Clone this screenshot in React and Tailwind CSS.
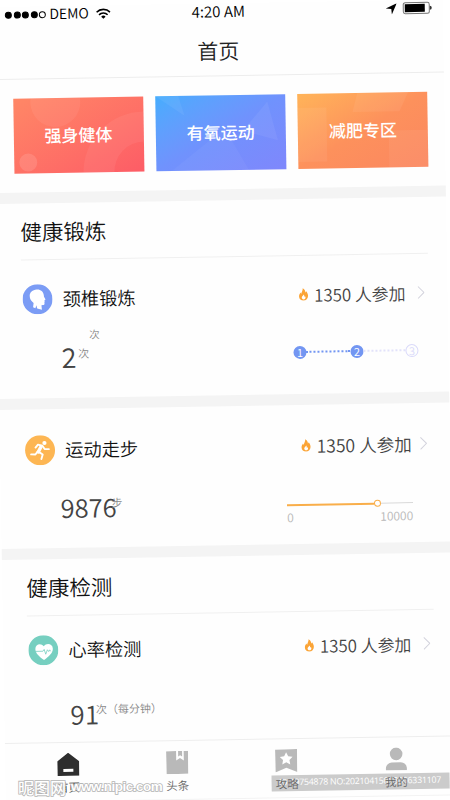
const categories = [
    { label: '强身健体', bg: 'bg-linear-to-br from-[#ff8766] to-[#fd5c66]', shape: 'rings' },
    { label: '有氧运动', bg: 'bg-linear-to-br from-[#45adfd] via-[#7092fd] to-[#7f87fc]', shape: 'triangles' },
    { label: '减肥专区', bg: 'bg-linear-to-br from-[#ffb459] via-[#fd915c] to-[#fb8760]', shape: 'blocks' },
];

const dots = [true, true, true, true, false];

function Shapes({ type }) {
    return (
        <svg className="absolute inset-0" width="130" height="76" viewBox="0 0 130 76" fill="#fff" fillOpacity="0.06">
            {type === 'rings' && (
                <>
                    <circle cx="42" cy="4" r="25" />
                    <circle cx="14" cy="64" r="9" fillOpacity="0.12" />
                    <path d="M69 76a61 61 0 0 1 61-61v30a30 30 0 0 0-30 31z" />
                </>
            )}
            {type === 'triangles' && (
                <>
                    <path d="M0 0l29 20L23 0z" />
                    <path d="M14 76l55-43 24 43z" fillOpacity="0.04" />
                    <path d="M112 7L87 36l35 10z" />
                </>
            )}
            {type === 'blocks' && (
                <>
                    <path d="M60 0h51l-9 19H55z" />
                    <path d="M0 14h29v54H0z" />
                    <path d="M91 38h39v38H91z" />
                </>
            )}
        </svg>
    );
}

function HeadIcon() {
    return (
        <svg width="30" height="30" viewBox="0 0 30 30">
            <circle cx="15" cy="15" r="15" fill="#7b9cf5" />
            <path
                d="M14.200 5.300c4-.3 6.600 2.200 7.100 5.400l.2 1.800 1.500 2.800-1.100.7.2 1.200-.3.600.1 1.500c0 1.100-.6 1.600-1.600 1.600h-1.500l.4 4.700-4.700-1.300-.8-3.400-1 3-2.300-1 .6-4.300C8.800 16.800 7.100 14.500 7.200 11.500 7.300 8 10.200 5.600 14.200 5.300z"
                fill="#fff"
            />
        </svg>
    );
}

function RunIcon() {
    return (
        <svg width="30" height="30" viewBox="0 0 30 30" fill="none" stroke="#fff" strokeWidth="1.900" strokeLinecap="round" strokeLinejoin="round">
            <circle cx="15" cy="15" r="15" fill="#fdb653" stroke="none" />
            <circle cx="19.500" cy="7.800" r="2.100" fill="#fff" stroke="none" />
            <path d="M10.500 12.200l2.500-2.900 4.400 1.200 2.200 3.300 4.200.2" />
            <path d="M16 11.500l-2.800 5.200" strokeWidth="3.400" />
            <path d="M12.500 16.200l-2.200 3-4.300-.2" />
            <path d="M14 16.800l3.600 2.500-1.400 4.500" />
        </svg>
    );
}

function HeartIcon() {
    return (
        <svg width="30" height="30" viewBox="0 0 30 30" fill="none">
            <circle cx="15" cy="15" r="15" fill="#76cfc0" />
            <path d="M15.500 24.800C10.500 21 7 18 7 13.600 7 8.500 12.800 7.400 15.500 11c2.700-3.600 9-2.500 9 2.600 0 4.400-4 7.400-9 11.200z" fill="#fff" />
            <path d="M7 16h7.500l1.300-1.800 1.500 4.800 1.700-4.400 1.300 1.800 1-1.700 1 1.500" stroke="#76cfc0" strokeWidth="0.8" />
        </svg>
    );
}

function Flame() {
    return (
        <svg className="shrink-0" width="10" height="13" viewBox="0 0 10 13">
            <path
                fillRule="evenodd"
                fill="#fba436"
                d="M4.300.3C6.600 1.600 7 3.300 6.900 4.700c.5-.3.8-.8.900-1.300C9 5 9.600 6.600 9.500 8.200c-.1 2.700-2 4.500-4.500 4.500S.5 11 .5 8.500C.5 6.800 1.300 5.700 2 4.500c.2.700.5 1.100.9 1.400C2.900 4 4.500 2.700 4.300.3zM5.300 6.600C4.600 7.700 3.200 8.300 3.200 9.700c0 1.100.8 1.800 1.900 1.800s1.900-.8 1.900-1.800c0-.6-.3-1-.6-1.400-.2.300-.4.400-.7.500.1-.7 0-1.500-.4-2.200z"
            />
        </svg>
    );
}

function Participants({ big }) {
    return (
        <div className="flex w-[126px] items-center text-[#444]">
            <Flame />
            <span className={`ml-[6px] w-[97px] whitespace-nowrap ${big ? 'text-[17.6px]' : 'text-[16.900px]'}`}>1350 人参加</span>
            <svg className="ml-[6px] shrink-0" width="7" height="13" viewBox="0 0 7 13" fill="none" stroke="#d3d3dd">
                <path d="M.5.5l6 6-6 6" />
            </svg>
        </div>
    );
}

function ItemHeader({ icon, title, big }) {
    return (
        <div className="flex h-[30px] items-center pl-[24.5px] pr-[23.5px]">
            {icon}
            <span className="ml-[10.5px] flex-1 text-[18.3px] text-[#111]">{title}</span>
            <Participants big={big} />
        </div>
    );
}

function SectionTitle({ children }) {
    return (
        <div className="ml-[24px] mr-[19px] h-[57px] border-b border-[#f0f0f0] text-[21.5px] leading-[55px] text-[#111]">
            {children}
        </div>
    );
}

function Steps() {
    return (
        <div className="flex items-center text-[11px] leading-none text-white">
            <span className="flex size-[13px] items-center justify-center rounded-full bg-[#7396f2]">1</span>
            <span className="w-[44px] border-t-2 border-dotted border-[#7396f2]" />
            <span className="flex size-[13px] items-center justify-center rounded-full bg-[#7396f2]">2</span>
            <span className="w-[42px] border-t-2 border-dotted border-[#e2e2fa]" />
            <span className="flex size-[13px] items-center justify-center rounded-full border border-[#dadafa] text-[#dadafa]">3</span>
        </div>
    );
}

function StepSlider() {
    return (
        <div className="w-[126px]">
            <div className="flex items-center">
                <span className="h-[2px] w-[87px] bg-[#f9ae4a]" />
                <span className="size-[7px] rounded-full border-[1.5px] border-[#f9ae4a] bg-white" />
                <span className="h-[1.5px] flex-1 bg-[#d9d9d9]" />
            </div>
            <div className="mt-[3px] flex justify-between text-[12px] leading-3 text-[#b8b8b8]">
                <span>0</span>
                <span>10000</span>
            </div>
        </div>
    );
}

function Tab({ label, active, children }) {
    return (
        <div className="flex w-[109.4px] flex-col items-center">
            <svg width="22" height="23" viewBox="0 0 22 23" fill={active ? '#2e2e2e' : '#b9b9b9'}>
                {children}
            </svg>
            <span className={`mt-[3px] text-[11.5px] leading-4 ${active ? 'text-[#333]' : 'text-[#666]'}`}>{label}</span>
        </div>
    );
}

export default function App() {
    return (
        <div className="relative h-[800px] w-[450px] overflow-hidden bg-white font-['Noto_Sans_CJK_SC','Noto_Sans',sans-serif] font-[350] text-[#222]">
            <div className="relative flex h-[796px] w-[450px] origin-top-left translate-x-[-7.3px] translate-y-[7px] rotate-[-0.95deg] flex-col border-b border-[#f3f3f3] bg-[#fefefe]">
                <header className="h-[73px] border-b border-[#ededed]">
                    <div className="-mt-px grid h-[18px] grid-cols-3 items-center pl-[12px] pr-[11px] text-[14.5px] leading-[17px] text-black">
                        <div className="flex items-center gap-[1.5px]">
                            {dots.map((on, i) => (
                                <span key={i} className={`size-[7px] rounded-full border border-black ${on ? 'bg-black' : 'bg-white'}`} />
                            ))}
                            <span className="-mt-px ml-[2px] text-[14px]">DEMO</span>
                            <svg className="ml-[6px]" width="15" height="11" viewBox="0 0 15 11" fill="none" stroke="#000" strokeWidth="1.6">
                                <path d="M.8 4a9.500 9.500 0 0 1 13.400 0M3.200 6.600a6 6 0 0 1 8.600 0" />
                                <path d="M7.500 10.700L5.300 8.500a3.200 3.200 0 0 1 4.400 0z" fill="#000" stroke="none" />
                            </svg>
                        </div>
                        <span className="-mt-[2px] text-center text-[15px]">4:20 AM</span>
                        <div className="flex items-center justify-end">
                            <svg width="11" height="11" viewBox="0 0 11 11">
                                <path d="M11 0L6 11l-.5-5.500L0 5z" />
                            </svg>
                            <span className="ml-[6px] flex h-[12px] w-[27px] rounded-[2.5px] border border-[#777] p-px">
                                <span className="w-[20px] bg-black" />
                            </span>
                            <span className="h-1 w-[2px] rounded-r bg-[#333]" />
                        </div>
                    </div>
                    <h1 className="text-center text-[21px] leading-[60px]">首页</h1>
                </header>

                <div className="flex h-[113px] gap-[12.3px] pl-[18.5px] pt-[18.5px]">
                    {categories.map(({ label, bg, shape }) => (
                        <div key={label} className={`relative flex h-[75.5px] w-[130px] items-center justify-center overflow-hidden pb-[2px] ${bg}`}>
                            <Shapes type={shape} />
                            <span className="relative text-[17px] font-medium text-white">{label}</span>
                        </div>
                    ))}
                </div>

                <section className="h-[206px] border-t-[11px] border-[#f4f4f4]">
                    <SectionTitle>健康锻炼</SectionTitle>
                    <div className="mt-[24px]">
                        <ItemHeader icon={<HeadIcon />} title="颈椎锻炼" />
                    </div>
                    <div className="flex justify-between pl-[63px] pr-[30px] pt-[13px]">
                        <div>
                            <div className="pl-[28px] text-[10.5px] leading-4 text-[#888]">次</div>
                            <div className="-mt-[2px] flex text-[27px] leading-8 text-[#444]">
                                2<span className="ml-[2px] text-[11px] leading-[25px] text-[#888]">次</span>
                            </div>
                        </div>
                        <div className="pt-[22.5px]">
                            <Steps />
                        </div>
                    </div>
                </section>

                <section className="h-[150px] border-t-[11.5px] border-[#f4f4f4] pt-[26px]">
                    <ItemHeader icon={<RunIcon />} title="运动走步" big />
                    <div className="flex justify-between pl-[59.5px] pr-[38px] pt-[25px]">
                        <div className="flex text-[25.5px] leading-[34px] text-[#444]">
                            9876<span className="-ml-[5px] text-[11px] leading-[26px] text-[#888]">步</span>
                        </div>
                        <div className="pt-[15px]">
                            <StepSlider />
                        </div>
                    </div>
                </section>

                <section className="h-[194px] border-t-[11px] border-[#f4f4f4]">
                    <SectionTitle>健康检测</SectionTitle>
                    <div className="mt-[19px]">
                        <ItemHeader icon={<HeartIcon />} title="心率检测" />
                    </div>
                    <div className="flex pl-[66px] pt-[32px] text-[26px] leading-[34px] text-[#444]">
                        91<span className="-ml-[3px] text-[11px] leading-[24px] text-[#888]">次（每分钟）</span>
                    </div>
                </section>

                <nav className="relative z-10 flex flex-1 border-t border-[#eee] pl-[8px] pt-[10px]">
                    <Tab label="首页" active>
                        <path fillRule="evenodd" d="M11 0l11 8.500V23H0V8.500zM6 16v3h10v-3z" />
                    </Tab>
                    <Tab label="头条">
                        <path d="M0 0h10v9.500l3.800-2.500 3.800 2.500V0H22v23H0z" />
                        <path d="M12 0h4v5.500l-2-1.300-2 1.300z" />
                    </Tab>
                    <Tab label="攻略">
                        <path d="M0 0h22v23l-11-4.500L0 23z" />
                        <path d="M11 3l2 4.100 4.400.6-3.200 3.100.8 4.500-4-2.200-4 2.200.8-4.500-3.200-3.100 4.400-.6z" fill="#fff" />
                    </Tab>
                    <Tab label="我的">
                        <circle cx="11" cy="6.500" r="6.300" />
                        <path d="M.5 23v-2.500a6 6 0 0 1 6-5.500h9a6 6 0 0 1 6 5.500V23z" />
                    </Tab>
                </nav>

                <div className="absolute left-[265.5px] top-[773px] h-[16px] w-[178px] whitespace-nowrap bg-[#cbcbcb] pl-[8px] font-['Open_Sans',sans-serif] text-[8.8px] font-normal leading-[15px] tracking-[-0.23px] text-white">
                    ID:29754878 NO:20210415093006331107
                </div>
            </div>
            <div className="absolute left-[18px] top-[777px] z-20 flex items-center whitespace-nowrap leading-5 text-white [-webkit-text-stroke:1.6px_#b4b4b4] [paint-order:stroke_fill]">
                <span className="text-[16px] font-medium">昵图网</span>
                <span className="ml-[5px] font-['Liberation_Sans',sans-serif] text-[13.5px] font-bold tracking-[-0.5px]">www.nipic.com</span>
            </div>
        </div>
    );
}
